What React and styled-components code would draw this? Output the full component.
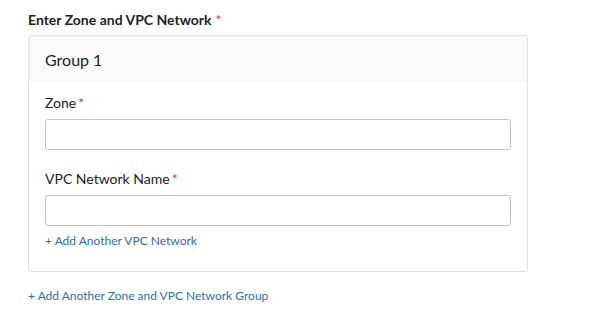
import React from "react";
import styled, { createGlobalStyle } from "styled-components";

const Global = createGlobalStyle`
  html, body { margin: 0; padding: 0; background: #fff; }
  body { font-family: Lato, "Open Sans", sans-serif; color: #222; }
`;

const Page = styled.div`
  padding: 12px 0 0 28px;
  width: 500px;
`;

const Title = styled.div`
  font-size: 14px;
  font-weight: 700;
  color: #222;
  line-height: 16px;
  margin-bottom: 7px;
`;

const Req = styled.span`
  color: #e0383e;
  margin-left: ${(p) => p.$gap || 3}px;
  font-weight: 400;
`;

const Card = styled.div`
  border: 1px solid #e0e0e0;
  border-radius: 3px;
  width: 498px;
  overflow: hidden;
`;

const CardHeader = styled.div`
  background: #f9f9f9;
  height: 46px;
  display: flex;
  align-items: center;
  padding-left: 16px;
  font-size: 16px;
  color: #222;
`;

const CardBody = styled.div`
  padding: 13px 16px 23px 16px;
  display: flex;
  flex-direction: column;
`;

const Field = styled.div`
  display: flex;
  flex-direction: column;
  margin-bottom: ${(p) => p.$mb || 0}px;
`;

const Label = styled.label`
  font-size: 14px;
  line-height: 16px;
  color: #222;
  margin-bottom: 8px;
`;

const Input = styled.input`
  box-sizing: border-box;
  width: 466px;
  height: 31px;
  border: 1px solid #c4c4c4;
  border-radius: 3px;
  outline: none;
  font-family: inherit;
  font-size: 13px;
  padding: 0 8px;
`;

const Link = styled.a`
  font-size: 12px;
  color: #2f6db5;
  text-decoration: none;
  cursor: pointer;
  line-height: 15px;
  margin-top: ${(p) => p.$mt || 0}px;
  display: inline-block;
`;

export default function App() {
  return (
    <>
      <Global />
      <Page>
        <Title>
          Enter Zone and VPC Network<Req $gap={4}>*</Req>
        </Title>
        <Card>
          <CardHeader>Group 1</CardHeader>
          <CardBody>
            <Field $mb={21}>
              <Label>
                Zone<Req $gap={2}>*</Req>
              </Label>
              <Input />
            </Field>
            <Field>
              <Label>
                VPC Network Name<Req $gap={2}>*</Req>
              </Label>
              <Input />
            </Field>
            <div>
              <Link $mt={7}>+ Add Another VPC Network</Link>
            </div>
          </CardBody>
        </Card>
        <Link $mt={16}>+ Add Another Zone and VPC Network Group</Link>
      </Page>
    </>
  );
}
